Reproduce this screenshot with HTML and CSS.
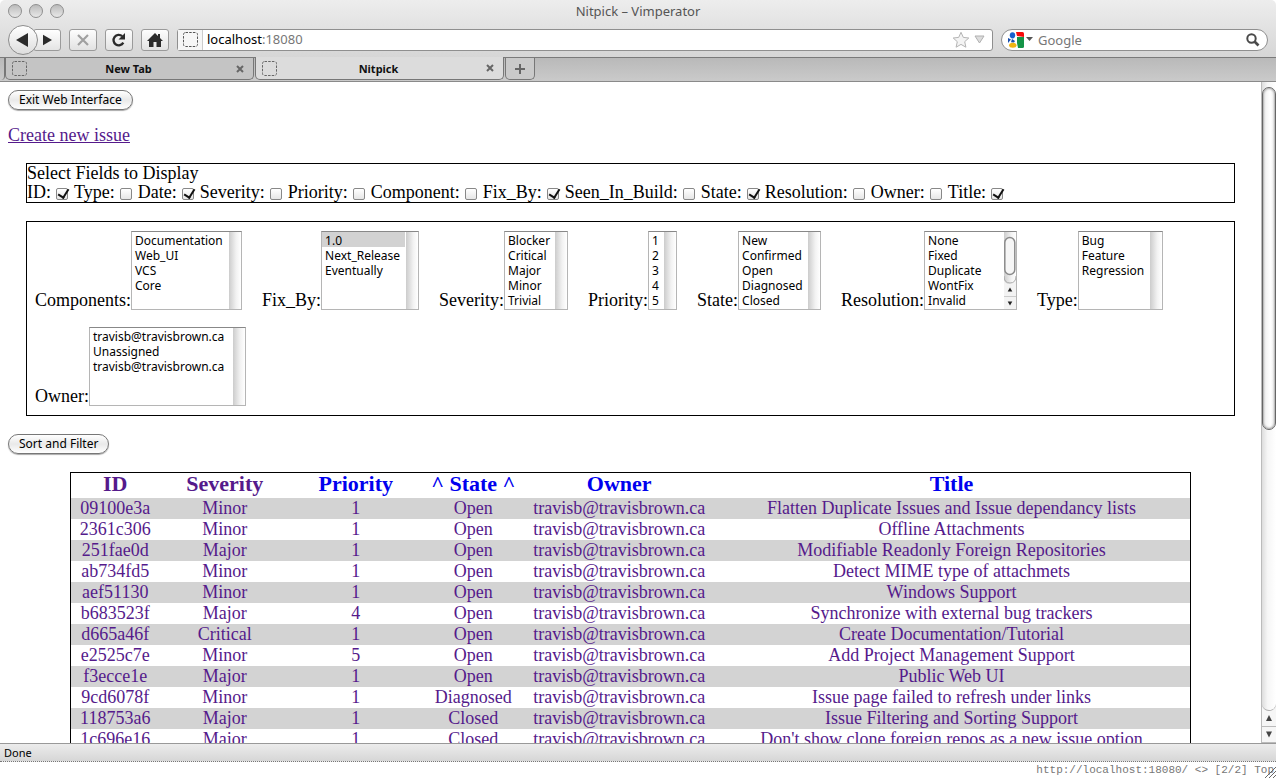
FILE: index.html
```
<!DOCTYPE html>
<html lang="en">
<head>
<meta charset="utf-8">
<title>Nitpick - Vimperator</title>
<link rel="stylesheet" href="styles.css">
</head>
<body>
<div class="window">
  <header class="chrome">
    <div class="titlebar">
      <div class="lights"><button aria-label="Close window"></button><button aria-label="Minimize window"></button><button aria-label="Zoom window"></button></div>
      <div class="title">Nitpick – Vimperator</div>
    </div>
    <div class="toolbar">
      <div class="history">
        <button class="back" aria-label="Back"><svg width="14" height="16" viewBox="0 0 14 16"><path d="M0 8 12 1v14z" fill="#2b2b2b"/></svg></button>
        <button class="forward" aria-label="Forward"><svg width="10" height="12" viewBox="0 0 10 12"><path d="M10 6 1 .8v10.400z" fill="#2b2b2b"/></svg></button>
      </div>
      <button class="tool" aria-label="Stop"><svg width="14" height="14" viewBox="0 0 14 14"><path d="M2 2l10 10M12 2L2 12" stroke="#a0a0a0" stroke-width="2.200"/></svg></button>
      <button class="tool" aria-label="Reload"><svg width="16" height="16" viewBox="0 0 16 16"><path d="M12.300 10.600A5.200 5.200 0 1 1 11.200 4.200" fill="none" stroke="#2b2b2b" stroke-width="2.300"/><path d="M14 1v6.500H7.500z" fill="#2b2b2b"/></svg></button>
      <button class="tool" aria-label="Home"><svg width="16" height="14" viewBox="0 0 16 14"><path d="M8 0l3 3V1h2v4l3 3h-2v6H9.500V9h-3v5H2V8H0z" fill="#2b2b2b"/></svg></button>
      <div class="address">
        <span class="site"><svg width="15" height="15" viewBox="0 0 15 15"><rect x=".5" y=".5" width="14" height="14" rx="2" fill="none" stroke="#555" stroke-dasharray="2.500 1.200"/></svg></span>
        <a class="url" href="#">localhost<span>:18080</span></a>
        <svg class="star" width="18" height="18" viewBox="0 0 18 18"><path d="M9 1.300l2.300 5.100 5.500.600-4.100 3.700 1.200 5.500L9 13.400l-4.900 2.800 1.200-5.500L1.200 7l5.500-.6z" fill="#f4f4f4" stroke="#b4b4b4" stroke-linejoin="round"/></svg>
        <svg width="11" height="9" viewBox="0 0 11 9"><path d="M1 1h9L5.500 8z" fill="#ddd" stroke="#b0b0b0"/></svg>
      </div>
      <div class="search">
        <svg width="16" height="16" viewBox="0 0 16 16"><path d="M8 0h6.500Q16 0 16 1.500V5L9 4z" fill="#f60a0a"/><path d="M9 5h7v9.500q0 1.500-1.500 1.500H10l-1-5z" fill="#159447"/><path d="M0 6l3 1.500L0 11z" fill="#174eae"/><ellipse cx="4.500" cy="3.300" rx="2.700" ry="3.100" fill="#1760ce"/><path d="M4 7l3 2-1 1.500-3-.2z" fill="#174eae"/><ellipse cx="4.800" cy="13.200" rx="3.700" ry="2.500" fill="#f0b412"/></svg>
        <svg width="7" height="5" viewBox="0 0 7 5"><path d="M0 0h7L3.500 4z" fill="#555"/></svg>
        <input type="text" placeholder="Google" aria-label="Search Google">
        <svg width="14" height="14" viewBox="0 0 14 14"><circle cx="5.500" cy="5.500" r="4.200" fill="none" stroke="#4a4a4a" stroke-width="2"/><path d="M8.500 8.500l4 4" stroke="#4a4a4a" stroke-width="2.600"/></svg>
      </div>
    </div>
    <nav class="tabs">
      <span class="tab-edge"></span>
      <div class="tab"><svg width="15" height="15" viewBox="0 0 15 15"><rect x=".5" y=".5" width="14" height="14" rx="2" fill="none" stroke="#666" stroke-dasharray="2.500 1.200"/></svg><a href="#">New Tab</a><button aria-label="Close tab"><svg width="8" height="8" viewBox="0 0 8 8"><path d="M1 1l6 6M7 1L1 7" stroke="#666" stroke-width="2"/></svg></button></div>
      <div class="tab active"><svg width="15" height="15" viewBox="0 0 15 15"><rect x=".5" y=".5" width="14" height="14" rx="2" fill="none" stroke="#666" stroke-dasharray="2.500 1.200"/></svg><a href="#">Nitpick</a><button aria-label="Close tab"><svg width="8" height="8" viewBox="0 0 8 8"><path d="M1 1l6 6M7 1L1 7" stroke="#666" stroke-width="2"/></svg></button></div>
      <button class="new-tab" aria-label="Open a new tab"><svg width="12" height="12" viewBox="0 0 12 12"><path d="M6 1v10M1 6h10" stroke="#666" stroke-width="2"/></svg></button>
    </nav>
  </header>

  <div class="viewport">
    <main class="page">
      <button class="aqua">Exit Web Interface</button>
      <p class="create"><a href="#">Create new issue</a></p>
      <section class="box fields">
        <div>Select Fields to Display</div>
        <div class="checks">
          <label>ID: <input type="checkbox" checked></label>
          <label>Type: <input type="checkbox"></label>
          <label>Date: <input type="checkbox" checked></label>
          <label>Severity: <input type="checkbox"></label>
          <label>Priority: <input type="checkbox"></label>
          <label>Component: <input type="checkbox"></label>
          <label>Fix_By: <input type="checkbox" checked></label>
          <label>Seen_In_Build: <input type="checkbox"></label>
          <label>State: <input type="checkbox" checked></label>
          <label>Resolution: <input type="checkbox"></label>
          <label>Owner: <input type="checkbox"></label>
          <label>Title: <input type="checkbox" checked></label>
        </div>
      </section>
      <section class="box filters">
        <label>Components:<select class="w-components" multiple size="5"><option>Documentation</option><option>Web_UI</option><option>VCS</option><option>Core</option></select></label>
        <label>Fix_By:<select class="w-fix" multiple size="5"><option class="chosen">1.0</option><option>Next_Release</option><option>Eventually</option></select></label>
        <label>Severity:<select class="w-severity" multiple size="5"><option>Blocker</option><option>Critical</option><option>Major</option><option>Minor</option><option>Trivial</option></select></label>
        <label>Priority:<select class="w-priority" multiple size="5"><option>1</option><option>2</option><option>3</option><option>4</option><option>5</option></select></label>
        <label>State:<select class="w-state" multiple size="5"><option>New</option><option>Confirmed</option><option>Open</option><option>Diagnosed</option><option>Closed</option></select></label>
        <label class="scrolling">Resolution:<select class="w-resolution" multiple size="5"><option>None</option><option>Fixed</option><option>Duplicate</option><option>WontFix</option><option>Invalid</option></select><svg class="list-scroll" width="12" height="77" viewBox="0 0 12 77"><path d="M0 46q0 6 6 6t6-6v31H0z" fill="#f3f3f3"/><path d="M0 44q0 7 6 7t6-7" fill="none" stroke="#aaa"/><rect x=".8" y="5.500" width="10" height="37" rx="5" fill="#f6f6f6" stroke="#8a8a8a" stroke-width="1.500"/><path d="M0 64.500h12" stroke="#ccc"/><path d="M6 55.500l2.300 4H3.700zM6 73.500l2.300-4H3.700z" fill="#222"/></svg></label>
        <label>Type:<select class="w-type" multiple size="5"><option>Bug</option><option>Feature</option><option>Regression</option></select></label>
        <label>Owner:<select class="w-owner" multiple size="5"><option>travisb@travisbrown.ca</option><option>Unassigned</option><option>travisb@travisbrown.ca</option></select></label>
      </section>
      <button class="aqua">Sort and Filter</button>
      <table class="issues">
        <colgroup><col class="c-id"><col class="c-severity"><col class="c-priority"><col class="c-state"><col class="c-owner"><col></colgroup>
        <thead><tr><th><a class="seen" href="#">ID</a></th><th><a class="seen" href="#">Severity</a></th><th><a href="#">Priority</a></th><th><a href="#">^ State ^</a></th><th><a href="#">Owner</a></th><th><a href="#">Title</a></th></tr></thead>
        <tbody>
          <tr><td><a href="#">09100e3a</a></td><td><a href="#">Minor</a></td><td><a href="#">1</a></td><td><a href="#">Open</a></td><td><a href="#">travisb@travisbrown.ca</a></td><td><a href="#">Flatten Duplicate Issues and Issue dependancy lists</a></td></tr>
          <tr><td><a href="#">2361c306</a></td><td><a href="#">Minor</a></td><td><a href="#">1</a></td><td><a href="#">Open</a></td><td><a href="#">travisb@travisbrown.ca</a></td><td><a href="#">Offline Attachments</a></td></tr>
          <tr><td><a href="#">251fae0d</a></td><td><a href="#">Major</a></td><td><a href="#">1</a></td><td><a href="#">Open</a></td><td><a href="#">travisb@travisbrown.ca</a></td><td><a href="#">Modifiable Readonly Foreign Repositories</a></td></tr>
          <tr><td><a href="#">ab734fd5</a></td><td><a href="#">Minor</a></td><td><a href="#">1</a></td><td><a href="#">Open</a></td><td><a href="#">travisb@travisbrown.ca</a></td><td><a href="#">Detect MIME type of attachmets</a></td></tr>
          <tr><td><a href="#">aef51130</a></td><td><a href="#">Minor</a></td><td><a href="#">1</a></td><td><a href="#">Open</a></td><td><a href="#">travisb@travisbrown.ca</a></td><td><a href="#">Windows Support</a></td></tr>
          <tr><td><a href="#">b683523f</a></td><td><a href="#">Major</a></td><td><a href="#">4</a></td><td><a href="#">Open</a></td><td><a href="#">travisb@travisbrown.ca</a></td><td><a href="#">Synchronize with external bug trackers</a></td></tr>
          <tr><td><a href="#">d665a46f</a></td><td><a href="#">Critical</a></td><td><a href="#">1</a></td><td><a href="#">Open</a></td><td><a href="#">travisb@travisbrown.ca</a></td><td><a href="#">Create Documentation/Tutorial</a></td></tr>
          <tr><td><a href="#">e2525c7e</a></td><td><a href="#">Minor</a></td><td><a href="#">5</a></td><td><a href="#">Open</a></td><td><a href="#">travisb@travisbrown.ca</a></td><td><a href="#">Add Project Management Support</a></td></tr>
          <tr><td><a href="#">f3ecce1e</a></td><td><a href="#">Major</a></td><td><a href="#">1</a></td><td><a href="#">Open</a></td><td><a href="#">travisb@travisbrown.ca</a></td><td><a href="#">Public Web UI</a></td></tr>
          <tr><td><a href="#">9cd6078f</a></td><td><a href="#">Minor</a></td><td><a href="#">1</a></td><td><a href="#">Diagnosed</a></td><td><a href="#">travisb@travisbrown.ca</a></td><td><a href="#">Issue page failed to refresh under links</a></td></tr>
          <tr><td><a href="#">118753a6</a></td><td><a href="#">Major</a></td><td><a href="#">1</a></td><td><a href="#">Closed</a></td><td><a href="#">travisb@travisbrown.ca</a></td><td><a href="#">Issue Filtering and Sorting Support</a></td></tr>
          <tr><td><a href="#">1c696e16</a></td><td><a href="#">Major</a></td><td><a href="#">1</a></td><td><a href="#">Closed</a></td><td><a href="#">travisb@travisbrown.ca</a></td><td><a href="#">Don't show clone foreign repos as a new issue option</a></td></tr>
        </tbody>
      </table>
    </main>
    <div class="scrollbar">
      <div class="track"><div class="thumb"></div></div>
      <button aria-label="Scroll up"><svg width="8" height="7" viewBox="0 0 8 7"><path d="M4 0l3 6H1z" fill="#444"/></svg></button>
      <button aria-label="Scroll down"><svg width="8" height="7" viewBox="0 0 8 7"><path d="M4 6.500l3-6H1z" fill="#444"/></svg></button>
    </div>
  </div>

  <footer>
    <div class="status">Done</div>
    <div class="command">http://localhost:18080/ &lt;&gt; [2/2] Top<svg class="grip" width="12" height="12" viewBox="0 0 12 12"><path d="M1 12L12 1M5 12l7-7M9 12l3-3" stroke="#666"/></svg></div>
  </footer>
</div>
</body>
</html>
```
FILE: styles.css
```
* { box-sizing: border-box; }
body { margin: 0; background: #fff; font-family: "Liberation Serif", serif; font-size: 18px; line-height: 19px; color: #000; }
button { font-family: "Noto Sans", sans-serif; padding: 0; margin: 0; border: 0; background: none; }
svg { display: block; flex: none; }

.window { display: flex; flex-direction: column; height: 100vh; overflow: hidden; }

/* Window chrome */
.chrome { flex: none; font-family: "Noto Sans", sans-serif; background: linear-gradient(#ededed, #d6d6d6 57px); border-radius: 5px 5px 0 0; }
.titlebar { display: grid; grid-template-columns: 1fr auto 1fr; align-items: center; height: 22px; padding: 0 8px; font-size: 13px; color: #555; }
.lights { display: flex; gap: 7px; }
.lights button { width: 14px; height: 14px; border: 1px solid #8f8f8f; border-radius: 50%; background: linear-gradient(#bbb, #e8e8e8); }
.toolbar { display: flex; align-items: center; height: 35px; padding: 0 8px; gap: 8px; }
.history { display: flex; align-items: center; }
.back { display: grid; place-items: center; width: 30px; height: 30px; border: 1px solid #8d8d8d; border-radius: 50%; background: linear-gradient(#fff, #ddd); z-index: 1; }
.forward { display: grid; place-items: center; width: 28px; height: 22px; margin-left: -5px; border: 1px solid #9a9a9a; border-radius: 3px; background: linear-gradient(#fff, #e4e4e4); }
.tool { display: grid; place-items: center; width: 28px; height: 22px; border: 1px solid #9a9a9a; border-radius: 3px; background: linear-gradient(#fdfdfd, #e2e2e2); }
.address { display: flex; align-items: center; flex: 1; height: 22px; padding-right: 7px; gap: 4px; background: #fff; border: 1px solid #8f8f8f; border-radius: 3px; font-size: 13px; }
.site { display: grid; place-items: center; width: 25px; height: 20px; border-right: 1px solid #ccc; background: #f6f6f6; }
.url { flex: 1; color: #000; text-decoration: none; }
.url span { color: #777; }
.search { display: flex; align-items: center; width: 267px; height: 22px; padding: 0 7px 0 6px; background: #fff; border: 1px solid #8f8f8f; border-radius: 11px; }
.search input { flex: 1; min-width: 0; padding: 0; margin-left: 5px; border: 0; outline: 0; background: none; font: 13px "Noto Sans", sans-serif; }
.search input::placeholder { color: #777; opacity: 1; }
.search svg + svg { margin-left: 2px; }

.tabs { display: flex; height: 25px; border-top: 1px solid #7a7a7a; border-bottom: 1px solid #8a8a8a; background: linear-gradient(#b9b9b9, #cacaca); }
.tab-edge { width: 5px; height: 22px; border-right: 1px solid #777; border-radius: 0 0 4px 0; }
.tab { display: flex; align-items: center; width: 249px; height: 22px; padding: 0 9px 0 6px; border: 1px solid #777; border-top: 0; border-radius: 0 0 5px 5px; background: #c4c4c4; font-size: 11px; font-weight: 700; margin-right: 1px; }
.tab.active { background: #dcdcdc; height: 23px; margin-top: -1px; }
.tab a { flex: 1; padding-right: 6px; text-align: center; color: #111; text-decoration: none; }
.new-tab { display: grid; place-items: center; width: 30px; height: 22px; border: 1px solid #777; border-top: 0; border-radius: 0 0 5px 5px; background: #cacaca; }

/* Page and its scrollbar */
.viewport { display: flex; flex: 1; min-height: 0; overflow: hidden; }
.page { flex: 1; min-width: 0; padding: 8px 8px 0; overflow: hidden; }
.scrollbar { display: flex; flex-direction: column; width: 15px; border-left: 1px solid #bbb; background: #f6f6f6; }
.track { flex: 1; padding-top: 5px; border-bottom: 1px solid #aaa; border-radius: 0 0 7px 7px; background: linear-gradient(90deg, #ddd, #f6f6f6 40%, #fff); }
.thumb { height: 55%; border: 1px solid #666; border-radius: 7px; background: linear-gradient(90deg, #eee, #fff 60%, #eee); box-shadow: inset 0 0 2px 1px #aaa; }
.scrollbar button { display: grid; place-items: center; height: 16px; border-bottom: 1px solid #bbb; }

.aqua { display: block; height: 20px; padding: 0 10px; border: 1px solid #777; border-radius: 10px; background: linear-gradient(#fff, #e9e9e9 50%, #fff); box-shadow: 0 1px 1px #aaa; font-size: 12px; line-height: 18px; }
.create { margin: 16px 0 18px; }
.create a { color: #551a8b; }
.box { margin: 0 18px 18px; border: 1px solid #000; }
.checks { display: flex; flex-wrap: wrap; column-gap: 6px; }
.checks label { display: flex; align-items: center; gap: 5px; }
.checks input { appearance: none; width: 12px; height: 12px; margin: 2px 0 0; border: 1px solid #888; border-radius: 2px; background: linear-gradient(#fff, #e6e6e6); position: relative; }
.checks input:checked::after { content: ""; position: absolute; left: 3px; top: -2px; width: 5px; height: 9px; border: solid #111; border-width: 0 2px 2px 0; transform: rotate(32deg); }

.filters { display: flex; flex-wrap: wrap; gap: 17px 20px; padding: 9px 8px; }
.filters label { display: flex; align-items: flex-end; }
.filters select { height: 79px; margin: 0; padding: 0 13px 0 0; border: 1px solid #b5b5b5; border-top-color: #888; border-radius: 0; outline: 0; background: linear-gradient(90deg, #ccc, #f2f2f2 60%, #fff) right / 12px 100% no-repeat #fff; font: 12px/15px "Noto Sans", sans-serif; overflow: hidden; scrollbar-width: none; }
.filters option { height: 15px; min-height: 15px; padding: 0 3px; line-height: 15px; }
.filters .chosen { background: #d2d2d2; }
.scrolling { position: relative; }
.list-scroll { position: absolute; right: 1px; bottom: 1px; }
.w-components { width: 111px; }
.w-fix { width: 98px; }
.w-severity { width: 64px; }
.w-priority { width: 29px; }
.w-state { width: 83px; }
.w-resolution { width: 93px; }
.w-type { width: 85px; }
.w-owner { width: 157px; }

.issues { width: 90%; margin: 18px auto 0; table-layout: fixed; border-collapse: separate; border-spacing: 0; border: 1px solid #000; text-align: center; }
.issues th { height: 25px; padding: 0; font-size: 22px; line-height: 21px; vertical-align: top; }
.issues td { height: 21px; padding: 0; line-height: 19px; }
.issues a { color: #551a8b; text-decoration: none; }
.issues th a { color: #00e; }
.issues th .seen { color: #551a8b; }
.issues tbody tr:nth-child(odd) { background: #d3d3d3; }
.c-id { width: 88px; }
.c-severity { width: 131px; }
.c-priority { width: 131px; }
.c-state { width: 104px; }
.c-owner { width: 188px; }

/* Status area */
footer { flex: none; font-family: "Noto Sans", sans-serif; }
.status { height: 19px; padding-left: 4px; border-top: 1px solid #999; border-bottom: 1px dotted #777; background: linear-gradient(#ececec, #d6d6d6); font-size: 11px; line-height: 18px; }
.command { position: relative; height: 16px; padding-right: 2px; text-align: right; color: #777; font: 11px/16px "Liberation Mono", monospace; }
.grip { position: absolute; right: 0; bottom: 0; }
```
